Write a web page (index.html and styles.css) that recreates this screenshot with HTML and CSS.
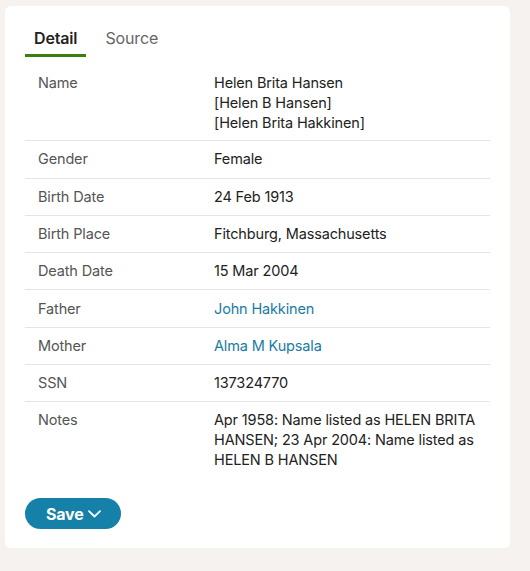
FILE: index.html
```html
<!DOCTYPE html>
<html>
<head>
<meta charset="utf-8">
<link rel="stylesheet" href="styles.css">
</head>
<body>
<div class="card">
  <div class="tabs">
    <div class="tab active">Detail</div>
    <div class="tab">Source</div>
  </div>
  <div class="table">
    <div class="row"><div class="label">Name</div><div class="value">Helen Brita Hansen<br>[Helen B Hansen]<br>[Helen Brita Hakkinen]</div></div>
    <div class="row"><div class="label">Gender</div><div class="value">Female</div></div>
    <div class="row"><div class="label">Birth Date</div><div class="value">24 Feb 1913</div></div>
    <div class="row"><div class="label">Birth Place</div><div class="value">Fitchburg, Massachusetts</div></div>
    <div class="row"><div class="label">Death Date</div><div class="value">15 Mar 2004</div></div>
    <div class="row"><div class="label">Father</div><div class="value"><a class="link">John Hakkinen</a></div></div>
    <div class="row"><div class="label">Mother</div><div class="value"><a class="link">Alma M Kupsala</a></div></div>
    <div class="row"><div class="label">SSN</div><div class="value">137324770</div></div>
    <div class="row last"><div class="label">Notes</div><div class="value">Apr 1958: Name listed as HELEN BRITA HANSEN; 23 Apr 2004: Name listed as HELEN B HANSEN</div></div>
  </div>
  <button class="save">Save<svg width="13" height="8" viewBox="0 0 13 8"><path d="M1 1.2 L6.5 6.5 L12 1.2" fill="none" stroke="#fff" stroke-width="1.8" stroke-linecap="round" stroke-linejoin="round"/></svg></button>
</div>
</body>
</html>
```
FILE: styles.css
```css
html, body { margin: 0; padding: 0; }
body {
  background: #f5f2ef;
  font-family: Inter, "Liberation Sans", sans-serif;
  font-size: 14.5px;
  letter-spacing: -0.15px;
  color: #222;
  width: 530px;
  height: 571px;
}
.card {
  margin: 6px 20px 0 5px;
  background: #fff;
  border-radius: 6px;
  padding: 20px 20px 19px 20px;
}
.tabs {
  display: flex;
}
.tab {
  padding: 1px 9px 5px 9px;
  line-height: 22px;
  font-size: 16px;
  color: #666;
  border-bottom: 3px solid transparent;
}
.tab + .tab { margin-left: 10px; }
.tab.active {
  color: #222;
  font-weight: 600;
  border-bottom-color: #3b7f0c;
}
.table {
  margin-top: 7px;
}
.row {
  display: grid;
  grid-template-columns: 189px 1fr;
  padding: 8.15px 0;
  line-height: 20px;
  border-bottom: 1px solid #e4e4e4;
}
.row:first-child { padding-top: 9.15px; padding-bottom: 7.15px; }
.row.last { border-bottom: none; }
.label {
  padding-left: 13px;
  color: #555;
}
.value {
  color: #222;
}
.link {
  color: #1a7ba3;
  text-decoration: none;
}
.save {
  margin-top: 19.7px;
  display: flex;
  align-items: center;
  gap: 4px;
  height: 31px;
  width: 96px;
  padding: 0 0 0 21px;
  border: none;
  border-radius: 16px;
  background: #1580a8;
  color: #fff;
  font-family: Inter, "Liberation Sans", sans-serif;
  font-size: 16px;
  font-weight: 700;
  letter-spacing: -0.2px;
}
```
